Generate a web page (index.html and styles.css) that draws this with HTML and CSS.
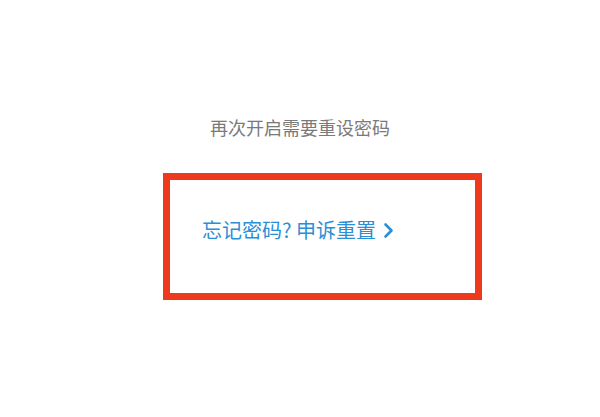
FILE: index.html
```html
<!DOCTYPE html>
<html lang="zh-CN">
<head>
<meta charset="utf-8">
<title>重设密码</title>
<link rel="stylesheet" href="styles.css">
</head>
<body>
<main class="page">
  <p class="hint">再次开启需要重设密码</p>
  <div class="box">
    <a class="link" href="#">忘记密码?&nbsp;申诉重置<svg class="chev" width="11" height="17" viewBox="0 0 11 17"><path d="M2.5 2.5 L8.5 8.5 L2.5 14.5" fill="none" stroke="#2b8fd6" stroke-width="2.6" stroke-linecap="round" stroke-linejoin="round"/></svg></a>
  </div>
</main>
</body>
</html>
```
FILE: styles.css
```css
html, body {
  margin: 0;
  padding: 0;
  background: #ffffff;
}
body {
  width: 600px;
  height: 417px;
  overflow: hidden;
  font-family: "Noto Sans CJK SC", "Noto Sans", sans-serif;
}
.page {
  display: flex;
  flex-direction: column;
  padding-top: 115px;
}
.hint {
  margin: 0;
  text-align: center;
  font-size: 18px;
  line-height: 24px;
  color: #7a7a7a;
}
.box {
  margin-top: 34px;
  margin-left: 163px;
  width: 319px;
  height: 127px;
  box-sizing: border-box;
  border: 7px solid #ee391c;
  padding: 38px 0 0 32px;
}
.link {
  display: flex;
  align-items: center;
  font-size: 20px;
  font-weight: 400;
  line-height: 24px;
  color: #2b8fd6;
  text-decoration: none;
}
.chev {
  margin-left: 7px;
}
```
